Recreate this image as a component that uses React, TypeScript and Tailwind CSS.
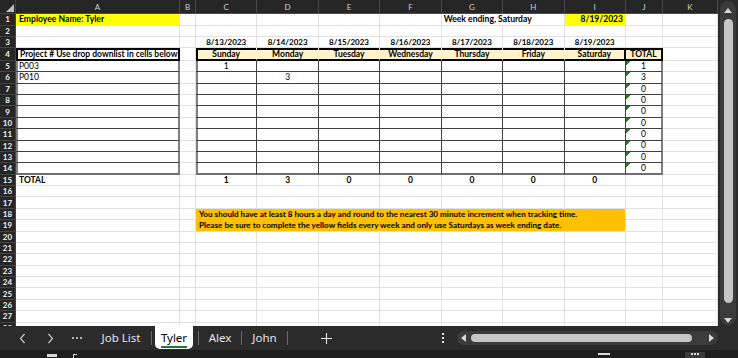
import React from "react";

// Column widths as they show at this zoom level
const COLS = [
  { key: "A", w: "w-[164px]" },
  { key: "B", w: "w-[16px]" },
  { key: "C", w: "w-[61.43px]" },
  { key: "D", w: "w-[61.43px]" },
  { key: "E", w: "w-[61.43px]" },
  { key: "F", w: "w-[61.43px]" },
  { key: "G", w: "w-[61.43px]" },
  { key: "H", w: "w-[61.43px]" },
  { key: "I", w: "w-[61.43px]" },
  { key: "J", w: "w-[37px]" },
  { key: "K", w: "w-[55px]" },
];

const DATES = ["8/13/2023", "8/14/2023", "8/15/2023", "8/16/2023", "8/17/2023", "8/18/2023", "8/19/2023"];
const DAYS = ["Sunday", "Monday", "Tuesday", "Wednesday", "Thursday", "Friday", "Saturday"];
const DAY_TOTALS = ["1", "3", "0", "0", "0", "0", "0"];
const ROW_TOTALS = ["1", "3", "0", "0", "0", "0", "0", "0", "0", "0"];

const GRID = "border-r border-b border-[#e1e1e1]";
const BODY = "border-r border-b border-[#404040]";
const TRI = "bg-[linear-gradient(135deg,#1e7b1e_0,#1e7b1e_3px,transparent_3px)]";

function Cell({ w, className = "", children }: { w: string; className?: string; children?: React.ReactNode }) {
  return (
    <div className={`${w} shrink-0 h-full flex items-center overflow-hidden whitespace-nowrap ${className}`}>
      {children}
    </div>
  );
}

function RowHead({ n }: { n: number }) {
  return (
    <div className="w-[16px] shrink-0 h-full flex items-center justify-center bg-[#262626] text-[#f2f2f2] font-bold text-[8px] border-r border-b border-[#444]">
      {n}
    </div>
  );
}

function cellsFor(r: number) {
  // Row 1: name + week ending
  if (r === 1) {
    return [
      <Cell key="A" w="w-[164px]" className={`${GRID} bg-[#ffff00] font-bold pl-[3px] text-[8.6px]`}>Employee Name: Tyler</Cell>,
      <Cell key="B" w="w-[16px]" className={GRID} />,
      <Cell key="C" w="w-[61.43px]" className={GRID} />,
      <Cell key="D" w="w-[61.43px]" className={GRID} />,
      <Cell key="E" w="w-[61.43px]" className={GRID} />,
      <Cell key="F" w="w-[61.43px]" className={GRID} />,
      <Cell key="GH" w="w-[122.86px]" className={`${GRID} font-bold pl-[2px] text-[8.6px]`}>Week ending, Saturday</Cell>,
      <Cell key="I" w="w-[61.43px]" className={`${GRID} bg-[#ffff00] font-bold justify-end pr-[2px]`}>8/19/2023</Cell>,
      <Cell key="J" w="w-[37px]" className={GRID} />,
      <Cell key="K" w="w-[55px]" className={GRID} />,
    ];
  }

  // Rows 18-19: the orange note
  if (r === 18 || r === 19) {
    const note =
      r === 18
        ? "You should have at least 8 hours a day and round to the nearest 30 minute increment when tracking time."
        : "Please be sure to complete the yellow fields every week and only use Saturdays as week ending date.";
    return [
      <Cell key="A" w="w-[164px]" className={GRID} />,
      <Cell key="B" w="w-[16px]" className={GRID} />,
      <Cell
        key="CI"
        w="w-[430px]"
        className={`border-r border-b border-[#e1e1e1] bg-[#ffc000] font-bold pl-[3px] text-[8.15px] ${r === 18 ? "border-b-[#ffc000]" : ""}`}
      >
        {note}
      </Cell>,
      <Cell key="J" w="w-[37px]" className={GRID} />,
      <Cell key="K" w="w-[55px]" className={GRID} />,
    ];
  }

  return COLS.map((c, i) => {
    const day = i - 2; // 0..6 for C..I
    const isDay = day >= 0 && day <= 6;

    if (r === 3 && isDay) {
      return <Cell key={c.key} w={c.w} className={`${GRID} font-bold justify-center text-[8px]`}>{DATES[day]}</Cell>;
    }

    if (r === 4) {
      if (c.key === "A")
        return (
          <Cell key={c.key} w={c.w} className="border-r-2 border-b-2 border-black shadow-[inset_2px_2px_0_#000] font-bold pl-[4px] pt-[2px]">
            Project # Use drop downlist in cells below
          </Cell>
        );
      if (isDay) {
        const edge =
          day === 0
            ? "border-r border-r-[#fff2cc] shadow-[inset_2px_2px_0_#000]"
            : day === 6
            ? "border-r-2 border-r-black shadow-[inset_0_2px_0_#000]"
            : "border-r border-r-[#fff2cc] shadow-[inset_0_2px_0_#000]";
        return (
          <Cell key={c.key} w={c.w} className={`bg-[#fff2cc] border-b-2 border-b-black ${edge} font-bold justify-center pt-[2px]`}>
            {DAYS[day]}
          </Cell>
        );
      }
      if (c.key === "J")
        return (
          <Cell key={c.key} w={c.w} className="bg-[#fff2cc] border-r-2 border-b-2 border-black shadow-[inset_0_2px_0_#000] font-bold justify-center pt-[2px]">
            TOTAL
          </Cell>
        );
    }

    if (r >= 5 && r <= 14) {
      const last = r === 14 ? "border-b-2 border-b-[#6f6f6f]" : "";
      if (c.key === "A")
        return (
          <Cell key={c.key} w={c.w} className={`${BODY} border-r-2 border-r-[#7f7f7f] shadow-[inset_2px_0_0_#7f7f7f] pl-[3px] ${last}`}>
            {r === 5 ? "P003" : r === 6 ? "P010" : ""}
          </Cell>
        );
      if (isDay) {
        const val = r === 5 && day === 0 ? "1" : r === 6 && day === 1 ? "3" : "";
        return (
          <Cell
            key={c.key}
            w={c.w}
            className={`${BODY} ${day === 0 ? "shadow-[inset_2px_0_0_#7f7f7f]" : ""} justify-center ${last}`}
          >
            {val}
          </Cell>
        );
      }
      if (c.key === "J")
        return (
          <Cell key={c.key} w={c.w} className={`${BODY} border-r-2 border-r-[#7f7f7f] ${TRI} justify-center ${last}`}>
            {ROW_TOTALS[r - 5]}
          </Cell>
        );
    }

    if (r === 15) {
      if (c.key === "A") return <Cell key={c.key} w={c.w} className={`${GRID} font-bold pl-[3px]`}>TOTAL</Cell>;
      if (isDay) return <Cell key={c.key} w={c.w} className={`${GRID} font-bold justify-center`}>{DAY_TOTALS[day]}</Cell>;
    }

    return <Cell key={c.key} w={c.w} className={GRID} />;
  });
}

function Sheet() {
  const rows = Array.from({ length: 28 }, (_, i) => i + 1);
  return (
    <div className="w-[718px] h-[326px] overflow-hidden flex flex-col bg-white font-['Lato',sans-serif] text-[8.5px] leading-none text-black">
      {/* column headers */}
      <div className="flex h-[14.3px] shrink-0 bg-[#262626]">
        <div className="w-[16px] shrink-0 h-full flex items-end justify-end pr-[1px] pb-[1px] border-r border-b border-[#444]">
          <svg width="8" height="8" viewBox="0 0 8 8">
            <polygon points="8,0 8,8 0,8" fill="#bdbdbd" />
          </svg>
        </div>
        {COLS.map((c) => (
          <div
            key={c.key}
            className={`${c.w} shrink-0 h-full flex items-center justify-center text-[8px] text-[#cfcfcf] border-r border-b border-[#4a4a4a]`}
          >
            {c.key}
          </div>
        ))}
      </div>
      {rows.map((r) => (
        <div key={r} className={`flex shrink-0 ${r === 4 ? "h-[12.5px]" : "h-[11.38px]"}`}>
          <RowHead n={r} />
          {cellsFor(r)}
        </div>
      ))}
    </div>
  );
}

function VScroll() {
  return (
    <div className="w-[20px] h-[326px] bg-[#2b2b2b] flex justify-center pt-[1px] pb-[1px]">
      <div className="w-[16px] h-full rounded-full bg-[#3b3b3b] flex flex-col items-center pt-[7px] pb-[2px]">
        <svg width="8" height="5" viewBox="0 0 8 5">
          <polygon points="4,0 8,5 0,5" fill="#d6d6d6" />
        </svg>
        <div className="w-[9px] h-[284px] mt-[6px] rounded-full bg-[#c6c6c6]" />
        <div className="flex-1" />
        <svg width="8" height="5" viewBox="0 0 8 5">
          <polygon points="0,0 8,0 4,5" fill="#d6d6d6" />
        </svg>
      </div>
    </div>
  );
}

function Sep() {
  return <div className="w-[1px] h-[14px] bg-[#6b6b6b] shrink-0" />;
}

function TabBar() {
  return (
    <div className="h-[24px] flex items-center bg-[#2b2b2b] text-[#e6e6e6] text-[11.5px] font-['Noto_Sans',sans-serif]">
      <div className="w-[8px] shrink-0" />
      <div className="w-[28px] shrink-0 flex justify-center">
        <svg width="7" height="11" viewBox="0 0 7 11" fill="none" stroke="#c8c8c8" strokeWidth="1.2">
          <polyline points="5.5,1 1.5,5.5 5.5,10" />
        </svg>
      </div>
      <div className="w-[28px] shrink-0 flex justify-center">
        <svg width="7" height="11" viewBox="0 0 7 11" fill="none" stroke="#c8c8c8" strokeWidth="1.2">
          <polyline points="1.5,1 5.5,5.5 1.5,10" />
        </svg>
      </div>
      <div className="w-[26px] shrink-0 flex justify-center gap-[2px]">
        <span className="w-[2px] h-[2px] rounded-full bg-[#e0e0e0]" />
        <span className="w-[2px] h-[2px] rounded-full bg-[#e0e0e0]" />
        <span className="w-[2px] h-[2px] rounded-full bg-[#e0e0e0]" />
      </div>
      <div className="w-[6px] shrink-0" />
      <div className="w-[50px] shrink-0 flex justify-center">Job List</div>
      <div className="w-[5px] shrink-0" />
      <Sep />
      <div className="w-[3px] shrink-0" />
      <div className="w-[38px] shrink-0 self-start h-[23px] bg-white rounded-b-[5px] flex flex-col items-center pt-[3px] text-black">
        <span>Tyler</span>
        <span className="w-[26px] h-[2px] bg-[#1a7a3c]" />
      </div>
      <div className="w-[5px] shrink-0" />
      <Sep />
      <div className="w-[42px] shrink-0 flex justify-center">Alex</div>
      <Sep />
      <div className="w-[45px] shrink-0 flex justify-center">John</div>
      <Sep />
      <div className="w-[76px] shrink-0 flex justify-center">
        <svg width="11" height="11" viewBox="0 0 11 11" stroke="#e0e0e0" strokeWidth="1.1">
          <line x1="5.5" y1="0" x2="5.5" y2="11" />
          <line x1="0" y1="5.5" x2="11" y2="5.5" />
        </svg>
      </div>
      <div className="w-[73px] shrink-0" />
      <div className="w-[12px] shrink-0 flex flex-col items-center gap-[2px]">
        <span className="w-[2px] h-[2px] bg-[#e0e0e0]" />
        <span className="w-[2px] h-[2px] bg-[#e0e0e0]" />
        <span className="w-[2px] h-[2px] bg-[#e0e0e0]" />
      </div>
      <div className="w-[8px] shrink-0" />
      <div className="w-[261px] shrink-0 h-[14px] rounded-full bg-[#3b3b3b] flex items-center pl-[4px] pr-[4px]">
        <svg width="5" height="8" viewBox="0 0 5 8">
          <polygon points="5,0 5,8 0,4" fill="#d6d6d6" />
        </svg>
        <div className="w-[221px] h-[8px] ml-[5px] rounded-full bg-[#c6c6c6]" />
        <div className="flex-1" />
        <svg width="5" height="8" viewBox="0 0 5 8">
          <polygon points="0,0 5,4 0,8" fill="#d6d6d6" />
        </svg>
      </div>
    </div>
  );
}

function StatusStrip() {
  return (
    <div className="h-[8px] bg-[#1f1f1f] flex items-end">
      <div className="w-[47px] shrink-0" />
      <div className="w-[10px] h-[3px] bg-[#d8d8d8] shrink-0 mb-[1px]" />
      <div className="w-[16px] shrink-0" />
      <div className="w-[4px] h-[4px] border-t border-l border-[#d8d8d8] shrink-0" />
      <div className="w-[521px] shrink-0" />
      <div className="w-[12px] h-[2px] bg-[#d8d8d8] shrink-0 mb-[3px]" />
      <div className="w-[75px] shrink-0" />
      <div className="w-[20px] h-[6px] bg-[#3a3a3a] shrink-0 flex items-start justify-center gap-[1px] pt-[1px]">
        <span className="w-[2px] h-[2px] bg-[#d8d8d8]" />
        <span className="w-[2px] h-[2px] bg-[#d8d8d8]" />
        <span className="w-[2px] h-[2px] bg-[#d8d8d8]" />
      </div>
    </div>
  );
}

export default function App() {
  return (
    <div className="w-[738px] h-[358px] overflow-hidden flex flex-col bg-[#2b2b2b]">
      <div className="flex h-[326px] shrink-0">
        <Sheet />
        <VScroll />
      </div>
      <TabBar />
      <StatusStrip />
    </div>
  );
}
